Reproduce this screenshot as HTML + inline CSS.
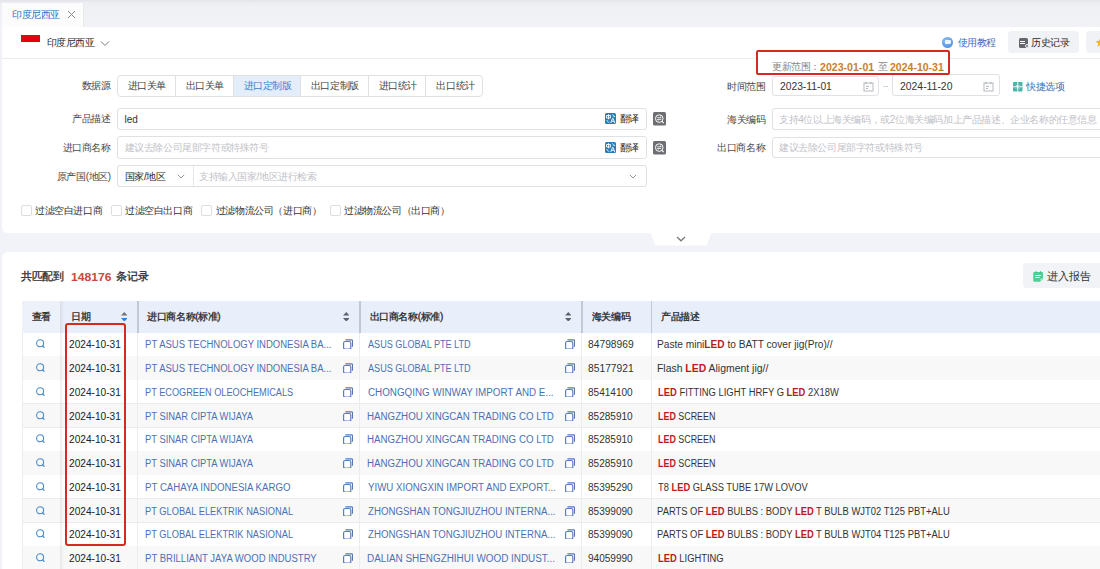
<!DOCTYPE html>
<html><head><meta charset="utf-8">
<style>
*{box-sizing:border-box;margin:0;padding:0}
html,body{width:1100px;height:569px;overflow:hidden;background:#f0f2f7;font-family:"Liberation Sans",sans-serif;font-size:10px;color:#333}
.a{position:absolute}
.t{position:absolute;white-space:nowrap;line-height:14px;height:14px}
.t b{color:#bb1a1f;font-weight:700}
.bx{position:absolute;border:1px solid #e0e1e5;border-radius:3px;background:#fff}
.vl{position:absolute;width:1px;background:#e0e1e5}
.cb{position:absolute;width:11px;height:11px;border:1px solid #dcdde1;border-radius:2px;background:#fff}
.row{position:absolute;left:22px;width:1078px;border-bottom:1px solid #ebeef5}
.cd{position:absolute;width:1px;background:#ebeef5}
</style></head><body>
<!-- tab bar -->
<div class="a" style="left:0;top:0;width:1100px;height:27px;background:linear-gradient(#e2e4e9,#eceef2 3px,#f0f1f5 8px,#f1f2f5)"></div>
<div class="a" style="left:2px;top:2.5px;width:81.5px;height:24.5px;background:#fcfcfd;border-right:1.5px solid #e8eaee"></div>
<svg class="a" style="left:67px;top:10px" width="9" height="9" viewBox="0 0 9 9"><path d="M1 1L8 8M8 1L1 8" stroke="#888" stroke-width="1"/></svg>
<!-- card 1 -->
<div class="a" style="left:1.5px;top:26.5px;width:1098.5px;height:206.5px;background:#fff;border-bottom-left-radius:5px"></div>
<div class="a" style="left:20.5px;top:35px;width:19.5px;height:7px;background:#e60012"></div>
<svg class="a" style="left:100px;top:40px" width="10" height="7" viewBox="0 0 10 7"><path d="M1 1.5L5 5.5L9 1.5" stroke="#777" stroke-width="1" fill="none"/></svg>
<div class="a" style="left:1.5px;top:58px;width:1098.5px;height:1px;background:#ebedf1"></div>
<!-- tutorial icon -->
<div class="a" style="left:942.2px;top:36.5px;width:11px;height:11px;border-radius:50%;background:radial-gradient(circle at 40% 35%,#8fc0f2,#3a86e0)"></div>
<div class="a" style="left:945px;top:40px;width:5.5px;height:4px;background:#fff;border-radius:1px;opacity:.85"></div>
<!-- history button -->
<div class="a" style="left:1008px;top:31px;width:71px;height:22px;border-radius:4px;background:#f0f2f6"></div>
<div class="a" style="left:1018.5px;top:38px;width:9px;height:9.5px;border-radius:1.5px;background:#63666e"></div>
<div class="a" style="left:1020.3px;top:40.5px;width:5px;height:1px;background:#fff"></div>
<div class="a" style="left:1020.3px;top:42.5px;width:5px;height:1px;background:#fff"></div>
<div class="a" style="left:1024.5px;top:44px;width:4px;height:4px;border-radius:50%;background:#63666e;border:1px solid #f0f2f6"></div>
<div class="a" style="left:1086px;top:31px;width:20px;height:22px;border-radius:4px;background:#f0f2f6"></div>
<svg class="a" style="left:1094.5px;top:36.5px" width="11" height="11" viewBox="0 0 24 24"><path d="M12 1.5l3.1 6.6 7.2.9-5.3 5 1.4 7.1L12 17.6l-6.4 3.5L7 14l-5.3-5 7.2-.9z" fill="#f5b226"/></svg>


<!-- button group -->
<div class="bx" style="left:117.3px;top:74.5px;width:366px;height:22px;border-radius:4px"></div>
<div class="a" style="left:233.6px;top:75.5px;width:67px;height:20px;background:#e3eefa"></div>
<div class="vl" style="left:175px;top:75px;height:21px"></div>
<div class="vl" style="left:233px;top:75px;height:21px"></div>
<div class="vl" style="left:300px;top:75px;height:21px"></div>
<div class="vl" style="left:368px;top:75px;height:21px"></div>
<div class="vl" style="left:425px;top:75px;height:21px"></div>

<!-- inputs left -->
<div class="bx" style="left:117.3px;top:108.2px;width:530px;height:21.5px"></div>
<div class="bx" style="left:117.3px;top:136.4px;width:530px;height:22.2px"></div>
<div class="bx" style="left:117.3px;top:165px;width:530px;height:21.6px"></div>
<div class="vl" style="left:192.5px;top:165.5px;height:20.5px;background:#e4e6ea"></div>
<svg class="a" style="left:177px;top:173.5px" width="8" height="5" viewBox="0 0 8 5"><path d="M.8 .8L4 4L7.2 .8" stroke="#888" stroke-width=".9" fill="none"/></svg>
<svg class="a" style="left:628.5px;top:174px" width="8" height="5" viewBox="0 0 8 5"><path d="M.8 .8L4 4L7.2 .8" stroke="#888" stroke-width=".9" fill="none"/></svg>
<!-- translate icons -->
<svg class="a" style="left:605.4px;top:112.8px" width="11" height="11" viewBox="0 0 22 22"><rect width="22" height="22" rx="3" fill="#2a7db5"/><path d="M3 5h8v5H3zM7 2.5v10" stroke="#fff" stroke-width="1.8" fill="none"/><path d="M14 3.5c2.5 0 4.2 1.5 4.5 4M17 6l1.5 1.8L20 6" stroke="#fff" stroke-width="1.5" fill="none"/><path d="M8.5 18.5c-2.5 0-4.5-1.5-4.8-4.5" stroke="#fff" stroke-width="1.5" fill="none"/><path d="M11.5 20L15 10.5h1L19.5 20M13 16.5h5" stroke="#fff" stroke-width="1.8" fill="none"/></svg>
<svg class="a" style="left:605.4px;top:141.6px" width="11" height="11" viewBox="0 0 22 22"><rect width="22" height="22" rx="3" fill="#2a7db5"/><path d="M3 5h8v5H3zM7 2.5v10" stroke="#fff" stroke-width="1.8" fill="none"/><path d="M14 3.5c2.5 0 4.2 1.5 4.5 4M17 6l1.5 1.8L20 6" stroke="#fff" stroke-width="1.5" fill="none"/><path d="M8.5 18.5c-2.5 0-4.5-1.5-4.8-4.5" stroke="#fff" stroke-width="1.5" fill="none"/><path d="M11.5 20L15 10.5h1L19.5 20M13 16.5h5" stroke="#fff" stroke-width="1.8" fill="none"/></svg>
<!-- gray search-swap icons -->
<svg class="a" style="left:653.2px;top:112.1px" width="13" height="13.7" viewBox="0 0 26 27"><rect width="26" height="27" rx="3" fill="#6e6f72"/><circle cx="12.5" cy="13" r="7.6" fill="none" stroke="#fff" stroke-width="2"/><path d="M18 18.5l3.5 3.5" stroke="#fff" stroke-width="2.2"/><path d="M8.5 11.3h8M14 9l2.5 2.3M16.5 14.7h-8M11 17l-2.5-2.3" stroke="#fff" stroke-width="1.6" fill="none"/></svg>
<svg class="a" style="left:653.2px;top:140.9px" width="13" height="13.7" viewBox="0 0 26 27"><rect width="26" height="27" rx="3" fill="#6e6f72"/><circle cx="12.5" cy="13" r="7.6" fill="none" stroke="#fff" stroke-width="2"/><path d="M18 18.5l3.5 3.5" stroke="#fff" stroke-width="2.2"/><path d="M8.5 11.3h8M14 9l2.5 2.3M16.5 14.7h-8M11 17l-2.5-2.3" stroke="#fff" stroke-width="1.6" fill="none"/></svg>

<!-- checkboxes -->
<div class="cb" style="left:20.5px;top:205.3px"></div>
<div class="cb" style="left:111.3px;top:205.3px"></div>
<div class="cb" style="left:201.2px;top:205.3px"></div>
<div class="cb" style="left:330.2px;top:205.3px"></div>

<!-- right filters -->
<div class="bx" style="left:772.4px;top:76px;width:106.6px;height:20.4px"></div>
<div class="bx" style="left:892.4px;top:74.4px;width:107.2px;height:22px"></div>
<div class="a" style="left:883px;top:85.5px;width:4.5px;height:1px;background:#d0d3d9"></div>
<svg class="a" style="left:862.5px;top:80.5px" width="11" height="11" viewBox="0 0 11 11"><rect x="1" y="2" width="9" height="8" fill="none" stroke="#b5b8be" stroke-width="1"/><path d="M3 .8v2.4M8 .8v2.4M3 5.5h3M3 7.5h2" stroke="#b5b8be" stroke-width="1"/></svg>
<svg class="a" style="left:982.8px;top:80.5px" width="11" height="11" viewBox="0 0 11 11"><rect x="1" y="2" width="9" height="8" fill="none" stroke="#b5b8be" stroke-width="1"/><path d="M3 .8v2.4M8 .8v2.4M3 5.5h3M3 7.5h2" stroke="#b5b8be" stroke-width="1"/></svg>
<svg class="a" style="left:1013px;top:82px" width="9.5" height="9.5" viewBox="0 0 10 10"><rect x="0" y="0" width="10" height="10" rx="1" fill="#48b5a8"/><path d="M5 0V10M0 5H10" stroke="#fff" stroke-width="1"/><path d="M3 3L4.3 4.3M7 3L5.7 4.3M3 7L4.3 5.7M7 7L5.7 5.7" stroke="#d8f0ec" stroke-width=".9"/></svg>
<div class="bx" style="left:772.4px;top:108.4px;width:340px;height:21.2px"></div>
<div class="bx" style="left:772.4px;top:136.6px;width:340px;height:21.4px"></div>

<!-- band -->
<div class="a" style="left:0;top:233px;width:1100px;height:19px;background:#f1f3f8"></div>
<svg class="a" style="left:650px;top:233px" width="62" height="13" viewBox="0 0 62 13"><path d="M0.5 0L61.5 0L56.5 12.5L5.5 12.5Z" fill="#fff"/><path d="M27 4L31 7.8L35 4" stroke="#777" stroke-width="1.2" fill="none"/></svg>

<!-- card 2 -->
<div class="a" style="left:2px;top:252px;width:1098px;height:317px;background:#fff;border-top-left-radius:6px"></div>
<div class="a" style="left:1022.7px;top:263.2px;width:90px;height:24.5px;border-radius:4px;background:#f1f3f6"></div>
<svg class="a" style="left:1032.7px;top:270.5px" width="10.5" height="11" viewBox="0 0 21 22"><path d="M3 2h15a2.5 2.5 0 0 1 2.5 2.5V15l-6 6.5H3A2.5 2.5 0 0 1 .5 19V4.5A2.5 2.5 0 0 1 3 2z" fill="#4fcf95"/><path d="M14.5 21.5V17a2 2 0 0 1 2-2h4" fill="#9ce6c2"/><path d="M5 9h11M5 13h8" stroke="#fff" stroke-width="2"/><path d="M6 .5v3M15 .5v3" stroke="#3bb37c" stroke-width="2"/></svg>

<!-- table header -->
<div class="a" style="left:22px;top:300.6px;width:1078px;height:32px;background:#e8eefa"></div>
<div class="a" style="left:22px;top:300.6px;width:38px;height:32px;background:#edf1fa"></div>

<div class="a" style="left:137.2px;top:300.6px;width:1.4px;height:32px;background:#c2c9d6"></div>
<div class="a" style="left:359.2px;top:300.6px;width:1.4px;height:32px;background:#c2c9d6"></div>
<div class="a" style="left:581.2px;top:300.6px;width:1.4px;height:32px;background:#c2c9d6"></div>
<div class="a" style="left:651px;top:300.6px;width:1.4px;height:32px;background:#c2c9d6"></div>
<!-- sort icons -->
<svg class="a" style="left:120.8px;top:311.6px" width="6.6" height="9.6" viewBox="0 0 6.6 9.6"><path d="M3.3 0L6.6 3.6H0z" fill="#6c7280"/><path d="M3.3 9.6L6.6 6H0z" fill="#2f7fe0"/></svg>
<svg class="a" style="left:342.7px;top:311.6px" width="6.6" height="9.6" viewBox="0 0 6.6 9.6"><path d="M3.3 0L6.6 3.6H0z" fill="#5c6270"/><path d="M3.3 9.6L6.6 6H0z" fill="#5c6270"/></svg>
<svg class="a" style="left:564.6px;top:311.6px" width="6.6" height="9.6" viewBox="0 0 6.6 9.6"><path d="M3.3 0L6.6 3.6H0z" fill="#5c6270"/><path d="M3.3 9.6L6.6 6H0z" fill="#5c6270"/></svg>
<div class="a" style="left:22px;top:332.60px;width:1078px;height:23.75px;background:#fff"></div>
<div class="a" style="left:22px;top:355.85px;width:1078px;height:1px;background:#ebecef"></div>
<svg class="a" style="left:34px;top:338.48px" width="12" height="12" viewBox="0 0 12 12"><circle cx="6.1" cy="5.3" r="3.5" fill="none" stroke="#4a8ccc" stroke-width="1.1"/><path d="M8.7 7.9L10 9.2" stroke="#4a8ccc" stroke-width="1.3" stroke-linecap="round"/></svg>
<svg class="a" style="left:343.10px;top:339.48px" width="10" height="10" viewBox="0 0 10 10"><path d="M3 1.6V0.9h5.6a1 1 0 0 1 1 1v5.3H8.9" fill="none" stroke="#5577b5" stroke-width="1.2"/><rect x="0.6" y="2.5" width="7.2" height="7.6" rx="1.4" fill="#fff" stroke="#5a7cc0" stroke-width="1.2"/></svg>
<svg class="a" style="left:564.50px;top:339.48px" width="10" height="10" viewBox="0 0 10 10"><path d="M3 1.6V0.9h5.6a1 1 0 0 1 1 1v5.3H8.9" fill="none" stroke="#5577b5" stroke-width="1.2"/><rect x="0.6" y="2.5" width="7.2" height="7.6" rx="1.4" fill="#fff" stroke="#5a7cc0" stroke-width="1.2"/></svg>
<div class="a" style="left:22px;top:356.35px;width:1078px;height:23.75px;background:#f8f8f9"></div>
<div class="a" style="left:22px;top:379.60px;width:1078px;height:1px;background:#ebecef"></div>
<svg class="a" style="left:34px;top:362.23px" width="12" height="12" viewBox="0 0 12 12"><circle cx="6.1" cy="5.3" r="3.5" fill="none" stroke="#4a8ccc" stroke-width="1.1"/><path d="M8.7 7.9L10 9.2" stroke="#4a8ccc" stroke-width="1.3" stroke-linecap="round"/></svg>
<svg class="a" style="left:343.10px;top:363.23px" width="10" height="10" viewBox="0 0 10 10"><path d="M3 1.6V0.9h5.6a1 1 0 0 1 1 1v5.3H8.9" fill="none" stroke="#5577b5" stroke-width="1.2"/><rect x="0.6" y="2.5" width="7.2" height="7.6" rx="1.4" fill="#fff" stroke="#5a7cc0" stroke-width="1.2"/></svg>
<svg class="a" style="left:564.50px;top:363.23px" width="10" height="10" viewBox="0 0 10 10"><path d="M3 1.6V0.9h5.6a1 1 0 0 1 1 1v5.3H8.9" fill="none" stroke="#5577b5" stroke-width="1.2"/><rect x="0.6" y="2.5" width="7.2" height="7.6" rx="1.4" fill="#fff" stroke="#5a7cc0" stroke-width="1.2"/></svg>
<div class="a" style="left:22px;top:380.10px;width:1078px;height:23.75px;background:#fff"></div>
<div class="a" style="left:22px;top:403.35px;width:1078px;height:1px;background:#ebecef"></div>
<svg class="a" style="left:34px;top:385.98px" width="12" height="12" viewBox="0 0 12 12"><circle cx="6.1" cy="5.3" r="3.5" fill="none" stroke="#4a8ccc" stroke-width="1.1"/><path d="M8.7 7.9L10 9.2" stroke="#4a8ccc" stroke-width="1.3" stroke-linecap="round"/></svg>
<svg class="a" style="left:343.10px;top:386.98px" width="10" height="10" viewBox="0 0 10 10"><path d="M3 1.6V0.9h5.6a1 1 0 0 1 1 1v5.3H8.9" fill="none" stroke="#5577b5" stroke-width="1.2"/><rect x="0.6" y="2.5" width="7.2" height="7.6" rx="1.4" fill="#fff" stroke="#5a7cc0" stroke-width="1.2"/></svg>
<svg class="a" style="left:564.50px;top:386.98px" width="10" height="10" viewBox="0 0 10 10"><path d="M3 1.6V0.9h5.6a1 1 0 0 1 1 1v5.3H8.9" fill="none" stroke="#5577b5" stroke-width="1.2"/><rect x="0.6" y="2.5" width="7.2" height="7.6" rx="1.4" fill="#fff" stroke="#5a7cc0" stroke-width="1.2"/></svg>
<div class="a" style="left:22px;top:403.85px;width:1078px;height:23.75px;background:#f8f8f9"></div>
<div class="a" style="left:22px;top:427.10px;width:1078px;height:1px;background:#ebecef"></div>
<svg class="a" style="left:34px;top:409.73px" width="12" height="12" viewBox="0 0 12 12"><circle cx="6.1" cy="5.3" r="3.5" fill="none" stroke="#4a8ccc" stroke-width="1.1"/><path d="M8.7 7.9L10 9.2" stroke="#4a8ccc" stroke-width="1.3" stroke-linecap="round"/></svg>
<svg class="a" style="left:343.10px;top:410.73px" width="10" height="10" viewBox="0 0 10 10"><path d="M3 1.6V0.9h5.6a1 1 0 0 1 1 1v5.3H8.9" fill="none" stroke="#5577b5" stroke-width="1.2"/><rect x="0.6" y="2.5" width="7.2" height="7.6" rx="1.4" fill="#fff" stroke="#5a7cc0" stroke-width="1.2"/></svg>
<svg class="a" style="left:564.50px;top:410.73px" width="10" height="10" viewBox="0 0 10 10"><path d="M3 1.6V0.9h5.6a1 1 0 0 1 1 1v5.3H8.9" fill="none" stroke="#5577b5" stroke-width="1.2"/><rect x="0.6" y="2.5" width="7.2" height="7.6" rx="1.4" fill="#fff" stroke="#5a7cc0" stroke-width="1.2"/></svg>
<div class="a" style="left:22px;top:427.60px;width:1078px;height:23.75px;background:#fff"></div>
<div class="a" style="left:22px;top:450.85px;width:1078px;height:1px;background:#ebecef"></div>
<svg class="a" style="left:34px;top:433.48px" width="12" height="12" viewBox="0 0 12 12"><circle cx="6.1" cy="5.3" r="3.5" fill="none" stroke="#4a8ccc" stroke-width="1.1"/><path d="M8.7 7.9L10 9.2" stroke="#4a8ccc" stroke-width="1.3" stroke-linecap="round"/></svg>
<svg class="a" style="left:343.10px;top:434.48px" width="10" height="10" viewBox="0 0 10 10"><path d="M3 1.6V0.9h5.6a1 1 0 0 1 1 1v5.3H8.9" fill="none" stroke="#5577b5" stroke-width="1.2"/><rect x="0.6" y="2.5" width="7.2" height="7.6" rx="1.4" fill="#fff" stroke="#5a7cc0" stroke-width="1.2"/></svg>
<svg class="a" style="left:564.50px;top:434.48px" width="10" height="10" viewBox="0 0 10 10"><path d="M3 1.6V0.9h5.6a1 1 0 0 1 1 1v5.3H8.9" fill="none" stroke="#5577b5" stroke-width="1.2"/><rect x="0.6" y="2.5" width="7.2" height="7.6" rx="1.4" fill="#fff" stroke="#5a7cc0" stroke-width="1.2"/></svg>
<div class="a" style="left:22px;top:451.35px;width:1078px;height:23.75px;background:#f8f8f9"></div>
<div class="a" style="left:22px;top:474.60px;width:1078px;height:1px;background:#ebecef"></div>
<svg class="a" style="left:34px;top:457.23px" width="12" height="12" viewBox="0 0 12 12"><circle cx="6.1" cy="5.3" r="3.5" fill="none" stroke="#4a8ccc" stroke-width="1.1"/><path d="M8.7 7.9L10 9.2" stroke="#4a8ccc" stroke-width="1.3" stroke-linecap="round"/></svg>
<svg class="a" style="left:343.10px;top:458.23px" width="10" height="10" viewBox="0 0 10 10"><path d="M3 1.6V0.9h5.6a1 1 0 0 1 1 1v5.3H8.9" fill="none" stroke="#5577b5" stroke-width="1.2"/><rect x="0.6" y="2.5" width="7.2" height="7.6" rx="1.4" fill="#fff" stroke="#5a7cc0" stroke-width="1.2"/></svg>
<svg class="a" style="left:564.50px;top:458.23px" width="10" height="10" viewBox="0 0 10 10"><path d="M3 1.6V0.9h5.6a1 1 0 0 1 1 1v5.3H8.9" fill="none" stroke="#5577b5" stroke-width="1.2"/><rect x="0.6" y="2.5" width="7.2" height="7.6" rx="1.4" fill="#fff" stroke="#5a7cc0" stroke-width="1.2"/></svg>
<div class="a" style="left:22px;top:475.10px;width:1078px;height:23.75px;background:#fff"></div>
<div class="a" style="left:22px;top:498.35px;width:1078px;height:1px;background:#ebecef"></div>
<svg class="a" style="left:34px;top:480.98px" width="12" height="12" viewBox="0 0 12 12"><circle cx="6.1" cy="5.3" r="3.5" fill="none" stroke="#4a8ccc" stroke-width="1.1"/><path d="M8.7 7.9L10 9.2" stroke="#4a8ccc" stroke-width="1.3" stroke-linecap="round"/></svg>
<svg class="a" style="left:343.10px;top:481.98px" width="10" height="10" viewBox="0 0 10 10"><path d="M3 1.6V0.9h5.6a1 1 0 0 1 1 1v5.3H8.9" fill="none" stroke="#5577b5" stroke-width="1.2"/><rect x="0.6" y="2.5" width="7.2" height="7.6" rx="1.4" fill="#fff" stroke="#5a7cc0" stroke-width="1.2"/></svg>
<svg class="a" style="left:564.50px;top:481.98px" width="10" height="10" viewBox="0 0 10 10"><path d="M3 1.6V0.9h5.6a1 1 0 0 1 1 1v5.3H8.9" fill="none" stroke="#5577b5" stroke-width="1.2"/><rect x="0.6" y="2.5" width="7.2" height="7.6" rx="1.4" fill="#fff" stroke="#5a7cc0" stroke-width="1.2"/></svg>
<div class="a" style="left:22px;top:498.85px;width:1078px;height:23.75px;background:#f8f8f9"></div>
<div class="a" style="left:22px;top:522.10px;width:1078px;height:1px;background:#ebecef"></div>
<svg class="a" style="left:34px;top:504.73px" width="12" height="12" viewBox="0 0 12 12"><circle cx="6.1" cy="5.3" r="3.5" fill="none" stroke="#4a8ccc" stroke-width="1.1"/><path d="M8.7 7.9L10 9.2" stroke="#4a8ccc" stroke-width="1.3" stroke-linecap="round"/></svg>
<svg class="a" style="left:343.10px;top:505.73px" width="10" height="10" viewBox="0 0 10 10"><path d="M3 1.6V0.9h5.6a1 1 0 0 1 1 1v5.3H8.9" fill="none" stroke="#5577b5" stroke-width="1.2"/><rect x="0.6" y="2.5" width="7.2" height="7.6" rx="1.4" fill="#fff" stroke="#5a7cc0" stroke-width="1.2"/></svg>
<svg class="a" style="left:564.50px;top:505.73px" width="10" height="10" viewBox="0 0 10 10"><path d="M3 1.6V0.9h5.6a1 1 0 0 1 1 1v5.3H8.9" fill="none" stroke="#5577b5" stroke-width="1.2"/><rect x="0.6" y="2.5" width="7.2" height="7.6" rx="1.4" fill="#fff" stroke="#5a7cc0" stroke-width="1.2"/></svg>
<div class="a" style="left:22px;top:522.60px;width:1078px;height:23.75px;background:#fff"></div>
<div class="a" style="left:22px;top:545.85px;width:1078px;height:1px;background:#ebecef"></div>
<svg class="a" style="left:34px;top:528.48px" width="12" height="12" viewBox="0 0 12 12"><circle cx="6.1" cy="5.3" r="3.5" fill="none" stroke="#4a8ccc" stroke-width="1.1"/><path d="M8.7 7.9L10 9.2" stroke="#4a8ccc" stroke-width="1.3" stroke-linecap="round"/></svg>
<svg class="a" style="left:343.10px;top:529.48px" width="10" height="10" viewBox="0 0 10 10"><path d="M3 1.6V0.9h5.6a1 1 0 0 1 1 1v5.3H8.9" fill="none" stroke="#5577b5" stroke-width="1.2"/><rect x="0.6" y="2.5" width="7.2" height="7.6" rx="1.4" fill="#fff" stroke="#5a7cc0" stroke-width="1.2"/></svg>
<svg class="a" style="left:564.50px;top:529.48px" width="10" height="10" viewBox="0 0 10 10"><path d="M3 1.6V0.9h5.6a1 1 0 0 1 1 1v5.3H8.9" fill="none" stroke="#5577b5" stroke-width="1.2"/><rect x="0.6" y="2.5" width="7.2" height="7.6" rx="1.4" fill="#fff" stroke="#5a7cc0" stroke-width="1.2"/></svg>
<div class="a" style="left:22px;top:546.35px;width:1078px;height:23.75px;background:#f8f8f9"></div>
<div class="a" style="left:22px;top:569.60px;width:1078px;height:1px;background:#ebecef"></div>
<svg class="a" style="left:34px;top:552.23px" width="12" height="12" viewBox="0 0 12 12"><circle cx="6.1" cy="5.3" r="3.5" fill="none" stroke="#4a8ccc" stroke-width="1.1"/><path d="M8.7 7.9L10 9.2" stroke="#4a8ccc" stroke-width="1.3" stroke-linecap="round"/></svg>
<svg class="a" style="left:343.10px;top:553.23px" width="10" height="10" viewBox="0 0 10 10"><path d="M3 1.6V0.9h5.6a1 1 0 0 1 1 1v5.3H8.9" fill="none" stroke="#5577b5" stroke-width="1.2"/><rect x="0.6" y="2.5" width="7.2" height="7.6" rx="1.4" fill="#fff" stroke="#5a7cc0" stroke-width="1.2"/></svg>
<svg class="a" style="left:564.50px;top:553.23px" width="10" height="10" viewBox="0 0 10 10"><path d="M3 1.6V0.9h5.6a1 1 0 0 1 1 1v5.3H8.9" fill="none" stroke="#5577b5" stroke-width="1.2"/><rect x="0.6" y="2.5" width="7.2" height="7.6" rx="1.4" fill="#fff" stroke="#5a7cc0" stroke-width="1.2"/></svg>
<div class="a" style="left:21.5px;top:332.6px;width:1px;height:237px;background:#ebecef"></div>
<div class="a" style="left:137.2px;top:332.6px;width:1px;height:237px;background:#ebecef"></div>
<div class="a" style="left:359.2px;top:332.6px;width:1px;height:237px;background:#ebecef"></div>
<div class="a" style="left:581.2px;top:332.6px;width:1px;height:237px;background:#ebecef"></div>
<div class="a" style="left:651px;top:332.6px;width:1px;height:237px;background:#ebecef"></div>
<!-- update range red box -->
<div class="a" style="left:756px;top:50px;width:194px;height:25px;border:2.2px solid #d42a20;border-radius:2px;background:#fff"></div>
<div class="a" style="left:60.3px;top:300.6px;width:3.5px;height:269px;background:linear-gradient(90deg,rgba(0,0,0,.07),rgba(0,0,0,0))"></div>
<div class="t" style="top:8.00px;font-size:10px;color:#2f70c8;letter-spacing:-0.4px;left:12.00px;">印度尼西亚</div>
<div class="t" style="top:36.00px;font-size:10px;color:#2a2a2a;letter-spacing:-0.4px;left:46.50px;">印度尼西亚</div>
<div class="t" style="top:35.50px;font-size:10px;color:#3d6cb5;letter-spacing:-0.4px;left:957.50px;">使用教程</div>
<div class="t" style="top:35.50px;font-size:10px;color:#2a2a2a;letter-spacing:-0.4px;left:1031.00px;">历史记录</div>
<div class="t" style="top:60.30px;font-size:10px;color:#888;letter-spacing:-0.4px;left:772.00px;">更新范围：</div>
<div class="t" style="top:60.80px;font-size:10px;color:#c8802e;font-weight:700;transform:scaleX(1.0588);transform-origin:0px 50%;left:819.60px;">2023-01-01</div>
<div class="t" style="top:60.30px;font-size:10px;color:#888;letter-spacing:-0.4px;left:878.00px;">至</div>
<div class="t" style="top:60.80px;font-size:10px;color:#c8802e;font-weight:700;transform:scaleX(1.0510);transform-origin:0px 50%;left:890.00px;">2024-10-31</div>
<div class="t" style="top:79.00px;font-size:10px;color:#4a4a4a;letter-spacing:-0.4px;right:989.30px;">数据源</div>
<div class="t" style="top:112.40px;font-size:10px;color:#4a4a4a;letter-spacing:-0.4px;right:989.30px;">产品描述</div>
<div class="t" style="top:140.80px;font-size:10px;color:#4a4a4a;letter-spacing:-0.4px;right:989.30px;">进口商名称</div>
<div class="t" style="top:169.50px;font-size:10px;color:#4a4a4a;letter-spacing:-0.4px;right:989.30px;">原产国(地区)</div>
<div class="t" style="top:79.00px;font-size:10px;color:#444;letter-spacing:-0.4px;left:127.60px;">进口关单</div>
<div class="t" style="top:79.00px;font-size:10px;color:#444;letter-spacing:-0.4px;left:185.50px;">出口关单</div>
<div class="t" style="top:79.00px;font-size:10px;color:#3c80d0;letter-spacing:-0.4px;left:243.60px;">进口定制版</div>
<div class="t" style="top:79.00px;font-size:10px;color:#444;letter-spacing:-0.4px;left:310.90px;">出口定制版</div>
<div class="t" style="top:79.00px;font-size:10px;color:#444;letter-spacing:-0.4px;left:378.50px;">进口统计</div>
<div class="t" style="top:79.00px;font-size:10px;color:#444;letter-spacing:-0.4px;left:436.40px;">出口统计</div>
<div class="t" style="top:112.90px;font-size:10px;color:#333;left:124.50px;">led</div>
<div class="t" style="top:112.40px;font-size:10px;color:#2a2a2a;letter-spacing:-0.4px;left:619.80px;">翻译</div>
<div class="t" style="top:140.80px;font-size:10px;color:#bfc2c8;letter-spacing:-0.4px;left:124.50px;">建议去除公司尾部字符或特殊符号</div>
<div class="t" style="top:140.80px;font-size:10px;color:#2a2a2a;letter-spacing:-0.4px;left:619.80px;">翻译</div>
<div class="t" style="top:169.50px;font-size:10px;color:#2a2a2a;letter-spacing:-0.275px;left:124.50px;">国家/地区</div>
<div class="t" style="top:169.50px;font-size:10px;color:#bfc2c8;letter-spacing:-0.4px;left:199.00px;">支持输入国家/地区进行检索</div>
<div class="t" style="top:204.20px;font-size:10px;color:#333;letter-spacing:-0.4px;left:35.00px;">过滤空白进口商</div>
<div class="t" style="top:204.20px;font-size:10px;color:#333;letter-spacing:-0.4px;left:125.00px;">过滤空白出口商</div>
<div class="t" style="top:204.20px;font-size:10px;color:#333;letter-spacing:-0.4px;left:215.80px;">过滤物流公司（进口商）</div>
<div class="t" style="top:204.20px;font-size:10px;color:#333;letter-spacing:-0.4px;left:344.00px;">过滤物流公司（出口商）</div>
<div class="t" style="top:79.70px;font-size:10px;color:#4a4a4a;letter-spacing:-0.4px;right:334.70px;">时间范围</div>
<div class="t" style="top:80.20px;font-size:10px;color:#333;transform:scaleX(1.0280);transform-origin:0px 50%;left:779.50px;">2023-11-01</div>
<div class="t" style="top:80.20px;font-size:10px;color:#333;transform:scaleX(1.0400);transform-origin:0px 50%;left:900.00px;">2024-11-20</div>
<div class="t" style="top:80.00px;font-size:10px;color:#3d6cb5;letter-spacing:-0.4px;left:1026.00px;">快捷选项</div>
<div class="t" style="top:112.50px;font-size:10px;color:#4a4a4a;letter-spacing:-0.4px;right:334.70px;">海关编码</div>
<div class="t" style="top:112.50px;font-size:10px;color:#bfc2c8;letter-spacing:-0.4px;left:779.00px;">支持4位以上海关编码，或2位海关编码加上产品描述、企业名称的任意信息</div>
<div class="t" style="top:140.80px;font-size:10px;color:#4a4a4a;letter-spacing:-0.4px;right:334.70px;">出口商名称</div>
<div class="t" style="top:140.80px;font-size:10px;color:#bfc2c8;letter-spacing:-0.4px;left:779.00px;">建议去除公司尾部字符或特殊符号</div>
<div class="t" style="top:269.20px;font-size:11px;color:#2a2a2a;-webkit-text-stroke:0.3px #2a2a2a;letter-spacing:-0.4px;left:21.00px;">共匹配到</div>
<div class="t" style="top:269.70px;font-size:11.5px;color:#c9483f;font-weight:700;transform:scaleX(1.0526);transform-origin:0px 50%;left:70.50px;">148176</div>
<div class="t" style="top:269.20px;font-size:11px;color:#2a2a2a;-webkit-text-stroke:0.3px #2a2a2a;letter-spacing:0.1px;left:116.00px;">条记录</div>
<div class="t" style="top:269.00px;font-size:11px;color:#333;left:1046.80px;">进入报告</div>
<div class="t" style="top:310.00px;font-size:10px;color:#2a2a2a;-webkit-text-stroke:0.3px #2a2a2a;letter-spacing:-0.4px;left:31.80px;">查看</div>
<div class="t" style="top:310.00px;font-size:10px;color:#2a2a2a;-webkit-text-stroke:0.3px #2a2a2a;letter-spacing:-0.4px;left:71.00px;">日期</div>
<div class="t" style="top:310.00px;font-size:10px;color:#2a2a2a;-webkit-text-stroke:0.3px #2a2a2a;letter-spacing:-0.4px;left:147.20px;">进口商名称(标准)</div>
<div class="t" style="top:310.00px;font-size:10px;color:#2a2a2a;-webkit-text-stroke:0.3px #2a2a2a;letter-spacing:-0.363px;left:369.50px;">出口商名称(标准)</div>
<div class="t" style="top:310.00px;font-size:10px;color:#2a2a2a;-webkit-text-stroke:0.3px #2a2a2a;letter-spacing:-0.4px;left:591.80px;">海关编码</div>
<div class="t" style="top:310.00px;font-size:10px;color:#2a2a2a;-webkit-text-stroke:0.3px #2a2a2a;letter-spacing:-0.4px;left:661.00px;">产品描述</div>
<div class="t" style="top:338.38px;font-size:10px;color:#222;transform:scaleX(1.0137);transform-origin:0px 50%;left:68.50px;">2024-10-31</div>
<div class="t" style="top:338.38px;font-size:10px;color:#4d70b3;transform:scaleX(0.9503);transform-origin:1px 50%;left:145.30px;">PT ASUS TECHNOLOGY INDONESIA BA...</div>
<div class="t" style="top:338.38px;font-size:10px;color:#4d70b3;transform:scaleX(0.9097);transform-origin:0px 50%;left:368.00px;">ASUS GLOBAL PTE LTD</div>
<div class="t" style="top:338.38px;font-size:10px;color:#333;transform:scaleX(1.0273);transform-origin:0px 50%;left:587.80px;">84798969</div>
<div class="t" style="top:338.38px;font-size:10px;color:#333;transform:scaleX(1.0145);transform-origin:1px 50%;left:656.70px;">Paste mini<b>LED</b> to BATT cover jig(Pro)//</div>
<div class="t" style="top:362.12px;font-size:10px;color:#222;transform:scaleX(1.0137);transform-origin:0px 50%;left:68.50px;">2024-10-31</div>
<div class="t" style="top:362.12px;font-size:10px;color:#4d70b3;transform:scaleX(0.9503);transform-origin:1px 50%;left:145.30px;">PT ASUS TECHNOLOGY INDONESIA BA...</div>
<div class="t" style="top:362.12px;font-size:10px;color:#4d70b3;transform:scaleX(0.9097);transform-origin:0px 50%;left:368.00px;">ASUS GLOBAL PTE LTD</div>
<div class="t" style="top:362.12px;font-size:10px;color:#333;transform:scaleX(1.0273);transform-origin:0px 50%;left:587.80px;">85177921</div>
<div class="t" style="top:362.12px;font-size:10px;color:#333;transform:scaleX(1.0434);transform-origin:1px 50%;left:656.70px;">Flash <b>LED</b> Aligment jig//</div>
<div class="t" style="top:385.88px;font-size:10px;color:#222;transform:scaleX(1.0137);transform-origin:0px 50%;left:68.50px;">2024-10-31</div>
<div class="t" style="top:385.88px;font-size:10px;color:#4d70b3;transform:scaleX(0.9169);transform-origin:1px 50%;left:145.30px;">PT ECOGREEN OLEOCHEMICALS</div>
<div class="t" style="top:385.88px;font-size:10px;color:#4d70b3;transform:scaleX(0.9825);transform-origin:0px 50%;left:368.00px;">CHONGQING WINWAY IMPORT AND E...</div>
<div class="t" style="top:385.88px;font-size:10px;color:#333;transform:scaleX(1.0044);transform-origin:0px 50%;left:587.80px;">85414100</div>
<div class="t" style="top:385.88px;font-size:10px;color:#333;transform:scaleX(0.9394);transform-origin:0px 50%;left:657.70px;"><b>LED</b> FITTING LIGHT HRFY G <b>LED</b> 2X18W</div>
<div class="t" style="top:409.62px;font-size:10px;color:#222;transform:scaleX(1.0137);transform-origin:0px 50%;left:68.50px;">2024-10-31</div>
<div class="t" style="top:409.62px;font-size:10px;color:#4d70b3;transform:scaleX(0.9357);transform-origin:1px 50%;left:145.30px;">PT SINAR CIPTA WIJAYA</div>
<div class="t" style="top:409.62px;font-size:10px;color:#4d70b3;transform:scaleX(0.9738);transform-origin:1px 50%;left:367.00px;">HANGZHOU XINGCAN TRADING CO LTD</div>
<div class="t" style="top:409.62px;font-size:10px;color:#333;transform:scaleX(1.0044);transform-origin:0px 50%;left:587.80px;">85285910</div>
<div class="t" style="top:409.62px;font-size:10px;color:#333;transform:scaleX(0.8906);transform-origin:0px 50%;left:657.70px;"><b>LED</b> SCREEN</div>
<div class="t" style="top:433.38px;font-size:10px;color:#222;transform:scaleX(1.0137);transform-origin:0px 50%;left:68.50px;">2024-10-31</div>
<div class="t" style="top:433.38px;font-size:10px;color:#4d70b3;transform:scaleX(0.9357);transform-origin:1px 50%;left:145.30px;">PT SINAR CIPTA WIJAYA</div>
<div class="t" style="top:433.38px;font-size:10px;color:#4d70b3;transform:scaleX(0.9738);transform-origin:1px 50%;left:367.00px;">HANGZHOU XINGCAN TRADING CO LTD</div>
<div class="t" style="top:433.38px;font-size:10px;color:#333;transform:scaleX(1.0044);transform-origin:0px 50%;left:587.80px;">85285910</div>
<div class="t" style="top:433.38px;font-size:10px;color:#333;transform:scaleX(0.8906);transform-origin:0px 50%;left:657.70px;"><b>LED</b> SCREEN</div>
<div class="t" style="top:457.12px;font-size:10px;color:#222;transform:scaleX(1.0137);transform-origin:0px 50%;left:68.50px;">2024-10-31</div>
<div class="t" style="top:457.12px;font-size:10px;color:#4d70b3;transform:scaleX(0.9357);transform-origin:1px 50%;left:145.30px;">PT SINAR CIPTA WIJAYA</div>
<div class="t" style="top:457.12px;font-size:10px;color:#4d70b3;transform:scaleX(0.9738);transform-origin:1px 50%;left:367.00px;">HANGZHOU XINGCAN TRADING CO LTD</div>
<div class="t" style="top:457.12px;font-size:10px;color:#333;transform:scaleX(1.0044);transform-origin:0px 50%;left:587.80px;">85285910</div>
<div class="t" style="top:457.12px;font-size:10px;color:#333;transform:scaleX(0.8906);transform-origin:0px 50%;left:657.70px;"><b>LED</b> SCREEN</div>
<div class="t" style="top:480.88px;font-size:10px;color:#222;transform:scaleX(1.0137);transform-origin:0px 50%;left:68.50px;">2024-10-31</div>
<div class="t" style="top:480.88px;font-size:10px;color:#4d70b3;transform:scaleX(0.9658);transform-origin:1px 50%;left:145.30px;">PT CAHAYA INDONESIA KARGO</div>
<div class="t" style="top:480.88px;font-size:10px;color:#4d70b3;transform:scaleX(0.9720);transform-origin:0px 50%;left:368.00px;">YIWU XIONGXIN IMPORT AND EXPORT...</div>
<div class="t" style="top:480.88px;font-size:10px;color:#333;transform:scaleX(1.0044);transform-origin:0px 50%;left:587.80px;">85395290</div>
<div class="t" style="top:480.88px;font-size:10px;color:#333;transform:scaleX(0.9335);transform-origin:0px 50%;left:657.70px;">T8 <b>LED</b> GLASS TUBE 17W LOVOV</div>
<div class="t" style="top:504.62px;font-size:10px;color:#222;transform:scaleX(1.0137);transform-origin:0px 50%;left:68.50px;">2024-10-31</div>
<div class="t" style="top:504.62px;font-size:10px;color:#4d70b3;transform:scaleX(0.9277);transform-origin:1px 50%;left:145.30px;">PT GLOBAL ELEKTRIK NASIONAL</div>
<div class="t" style="top:504.62px;font-size:10px;color:#4d70b3;transform:scaleX(0.9689);transform-origin:0px 50%;left:368.00px;">ZHONGSHAN TONGJIUZHOU INTERNA...</div>
<div class="t" style="top:504.62px;font-size:10px;color:#333;transform:scaleX(1.0044);transform-origin:0px 50%;left:587.80px;">85399090</div>
<div class="t" style="top:504.62px;font-size:10px;color:#333;transform:scaleX(0.9394);transform-origin:1px 50%;left:656.70px;">PARTS OF <b>LED</b> BULBS : BODY <b>LED</b> T BULB WJT02 T125 PBT+ALU</div>
<div class="t" style="top:528.38px;font-size:10px;color:#222;transform:scaleX(1.0137);transform-origin:0px 50%;left:68.50px;">2024-10-31</div>
<div class="t" style="top:528.38px;font-size:10px;color:#4d70b3;transform:scaleX(0.9277);transform-origin:1px 50%;left:145.30px;">PT GLOBAL ELEKTRIK NASIONAL</div>
<div class="t" style="top:528.38px;font-size:10px;color:#4d70b3;transform:scaleX(0.9689);transform-origin:0px 50%;left:368.00px;">ZHONGSHAN TONGJIUZHOU INTERNA...</div>
<div class="t" style="top:528.38px;font-size:10px;color:#333;transform:scaleX(1.0044);transform-origin:0px 50%;left:587.80px;">85399090</div>
<div class="t" style="top:528.38px;font-size:10px;color:#333;transform:scaleX(0.9394);transform-origin:1px 50%;left:656.70px;">PARTS OF <b>LED</b> BULBS : BODY <b>LED</b> T BULB WJT04 T125 PBT+ALU</div>
<div class="t" style="top:552.12px;font-size:10px;color:#222;transform:scaleX(1.0137);transform-origin:0px 50%;left:68.50px;">2024-10-31</div>
<div class="t" style="top:552.12px;font-size:10px;color:#4d70b3;transform:scaleX(0.9525);transform-origin:1px 50%;left:145.30px;">PT BRILLIANT JAYA WOOD INDUSTRY</div>
<div class="t" style="top:552.12px;font-size:10px;color:#4d70b3;transform:scaleX(0.9894);transform-origin:1px 50%;left:367.00px;">DALIAN SHENGZHIHUI WOOD INDUST...</div>
<div class="t" style="top:552.12px;font-size:10px;color:#333;transform:scaleX(1.0044);transform-origin:0px 50%;left:587.80px;">94059990</div>
<div class="t" style="top:552.12px;font-size:10px;color:#333;transform:scaleX(0.9371);transform-origin:0px 50%;left:657.70px;"><b>LED</b> LIGHTING</div>
<!-- red box dates -->
<div class="a" style="left:64.8px;top:322.8px;width:61.5px;height:223.4px;border:2.6px solid #d42a20;border-radius:3px"></div>
</body></html>
